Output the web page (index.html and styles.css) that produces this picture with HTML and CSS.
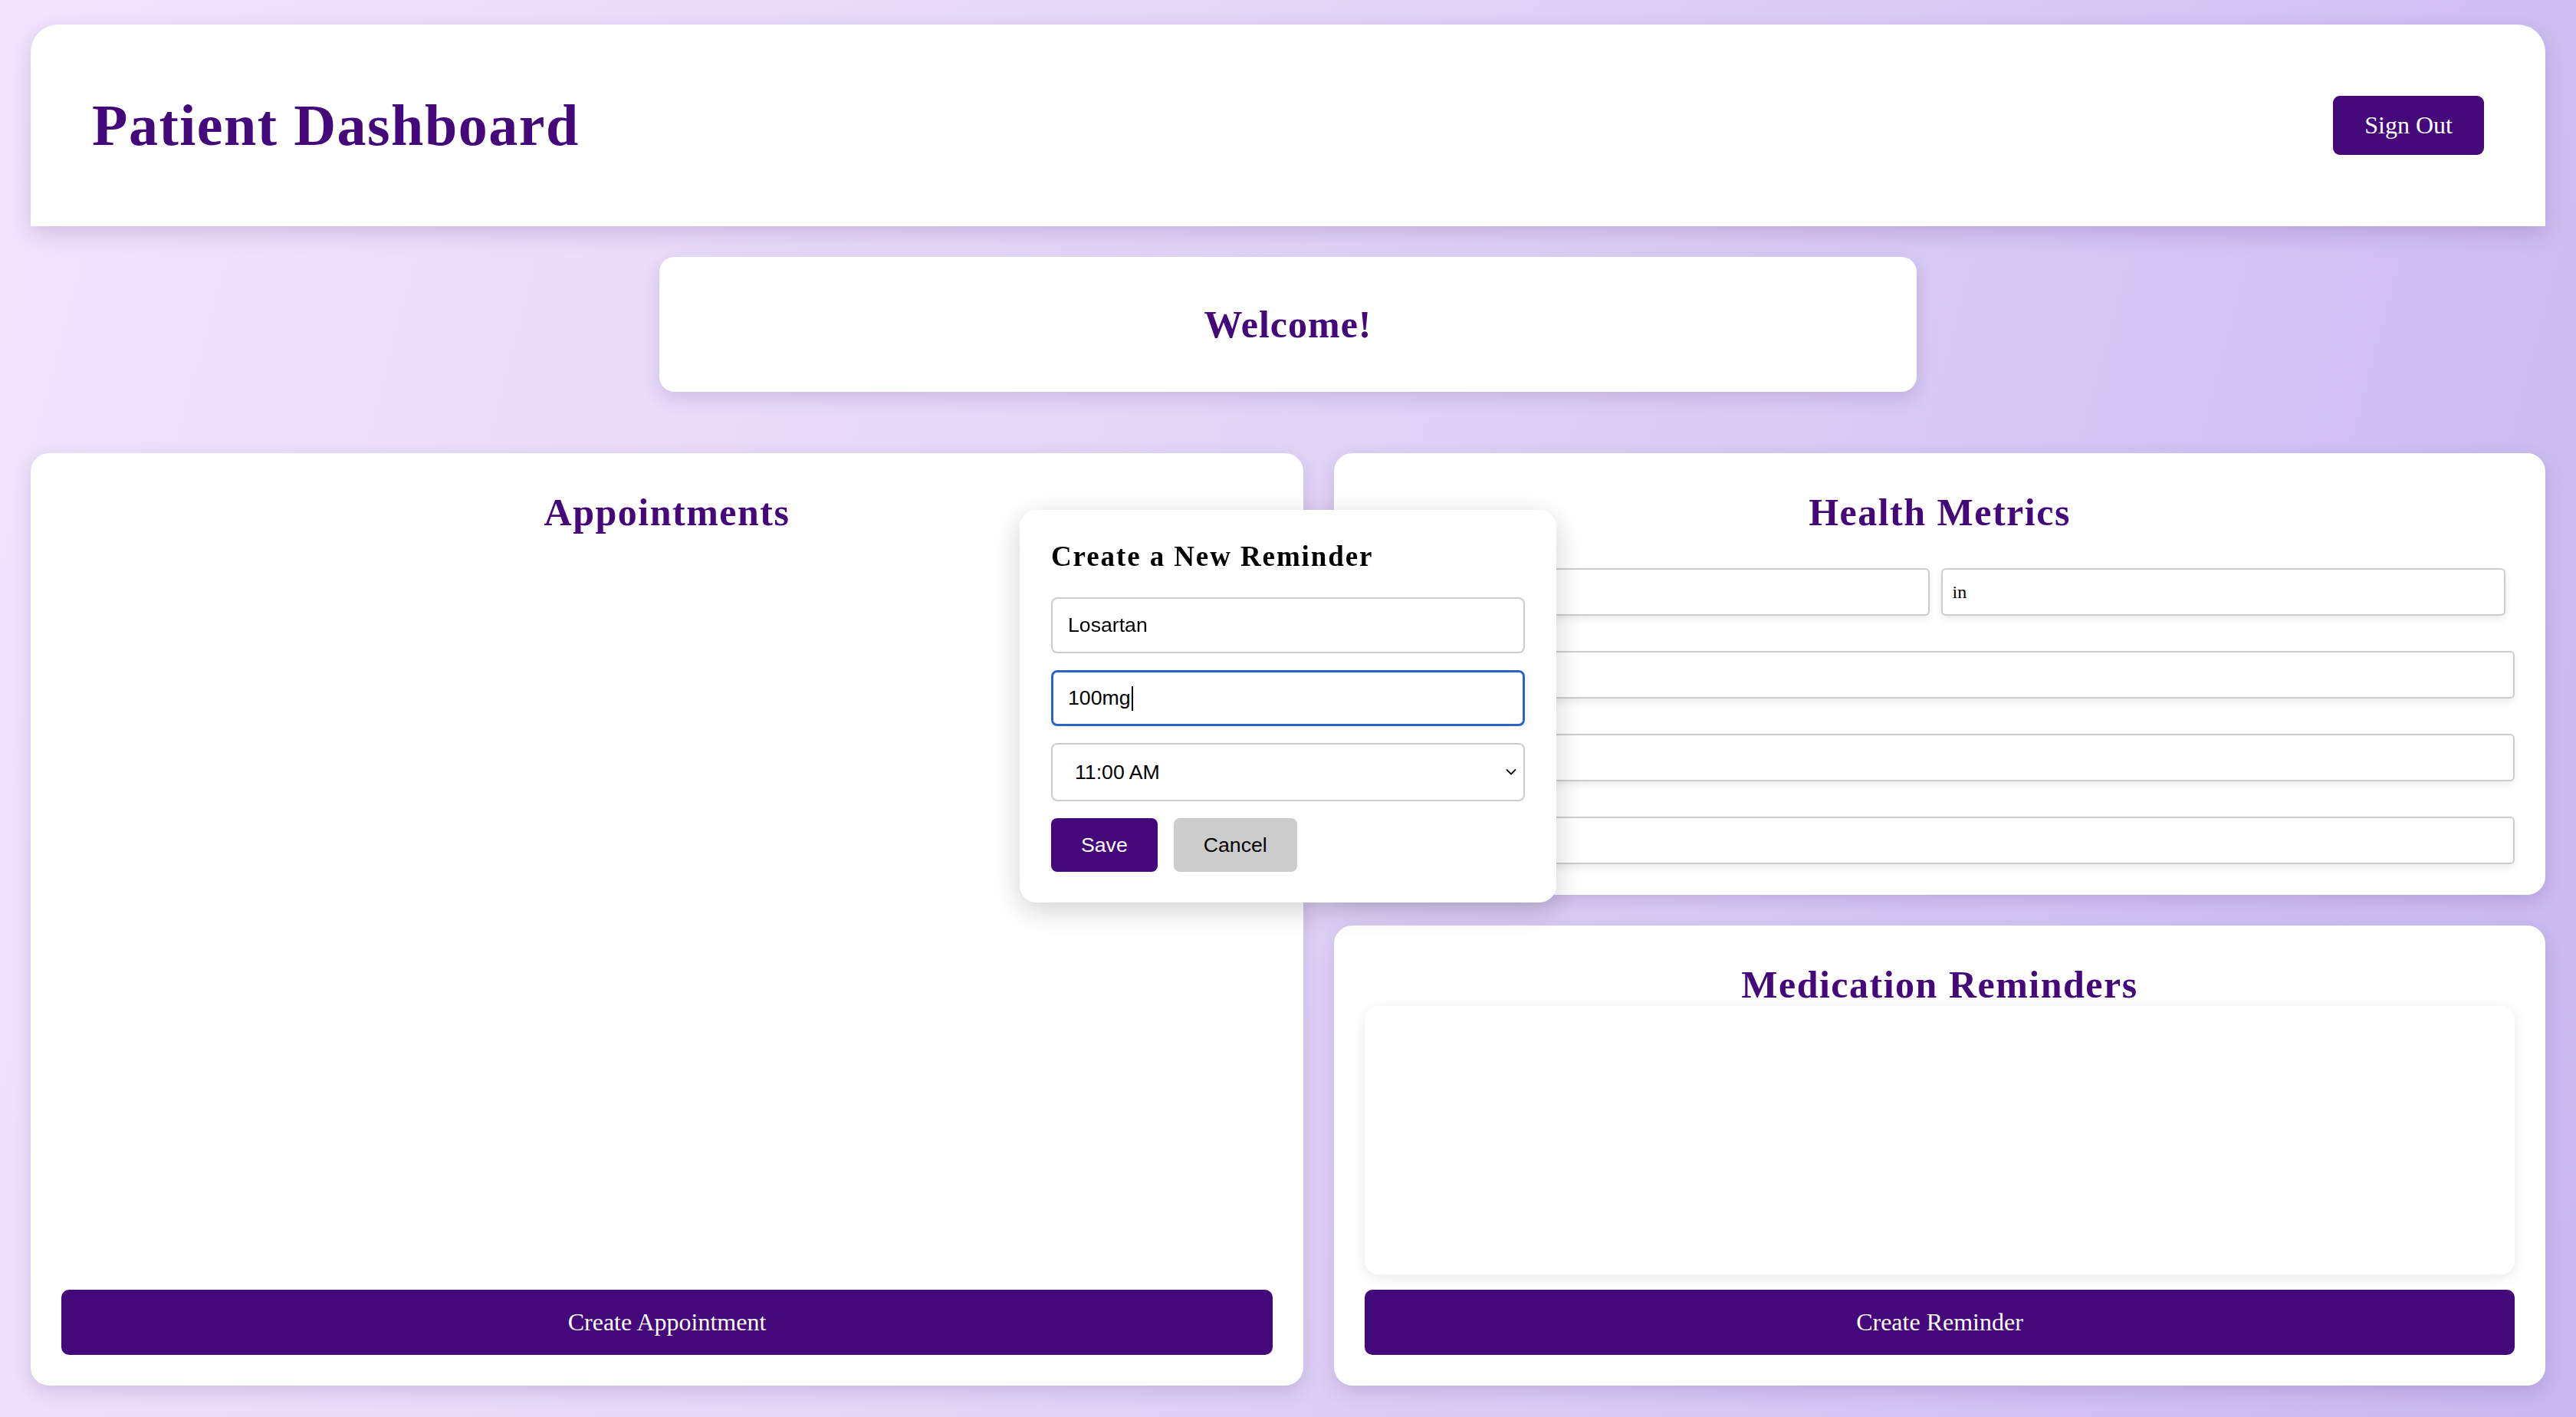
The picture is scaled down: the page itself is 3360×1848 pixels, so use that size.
FILE: index.html
```html
<!DOCTYPE html>
<html lang="en">
<head>
<meta charset="utf-8">
<title>Patient Dashboard</title>
<link rel="stylesheet" href="styles.css">
</head>
<body>
<header class="topbar">
  <h1 class="brand">Patient Dashboard</h1>
  <button class="btn-signout" type="button">Sign Out</button>
</header>

<section class="welcome">
  <h2 class="welcome-title">Welcome!</h2>
</section>

<main class="grid">
  <section class="card card-appointments">
    <h2 class="card-title">Appointments</h2>
    <button class="btn-wide" type="button">Create Appointment</button>
  </section>

  <section class="card card-metrics">
    <h2 class="card-title">Health Metrics</h2>
    <div class="metrics">
      <div class="metric-row">
        <input class="metric-input metric-half" type="text" value="">
        <input class="metric-input metric-half" type="text" value="in">
      </div>
      <input class="metric-input" type="text" value="">
      <input class="metric-input" type="text" value="">
      <input class="metric-input" type="text" value="">
    </div>
  </section>

  <section class="card card-meds">
    <h2 class="card-title">Medication Reminders</h2>
    <div class="med-list"></div>
    <button class="btn-wide" type="button">Create Reminder</button>
  </section>
</main>

<div class="modal">
  <h3 class="modal-title">Create a New Reminder</h3>
  <div class="modal-form">
    <input class="field" type="text" value="Losartan">
    <div class="field field-focused">100mg<span class="caret"></span></div>
    <div class="field field-select">
      <select class="select-native">
        <option>11:00 AM</option>
      </select>
      <svg class="chevron" width="14" height="10" viewBox="0 0 14 10"><path d="M1.5 2 L7 7.5 L12.5 2" fill="none" stroke="#111" stroke-width="1.8" stroke-linecap="round" stroke-linejoin="round"/></svg>
    </div>
    <div class="modal-actions">
      <button class="btn-save" type="button">Save</button>
      <button class="btn-cancel" type="button">Cancel</button>
    </div>
  </div>
</div>
</body>
</html>
```

FILE: styles.css
```css
* { box-sizing: border-box; }

html, body { height: 100%; }

body {
  margin: 0;
  padding: 32px 40px 40px;
  font-family: "Liberation Serif", "Times New Roman", serif;
  background: linear-gradient(105deg, #f1e5fc 0%, #e2d6f7 45%, #c8b8f0 100%);
  color: #000;
}

.topbar {
  display: flex;
  align-items: center;
  justify-content: space-between;
  padding: 86px 80px;
  background: #fff;
  border-radius: 36px 36px 0 0;
  box-shadow: 0 10px 28px rgba(60, 30, 110, 0.18);
}

.brand {
  margin: 0;
  font-size: 76px;
  line-height: 91px;
  font-weight: 700;
  letter-spacing: 1.5px;
  color: #45087a;
}

.btn-signout {
  font-family: "Liberation Serif", "Times New Roman", serif;
  font-size: 32px;
  line-height: 37px;
  padding: 20px 41px;
  color: #fff;
  background: #45087a;
  border: none;
  border-radius: 9px;
}

.welcome {
  width: 50%;
  margin: 40px auto 0;
  padding: 60px 0;
  background: #fff;
  border-radius: 20px;
  box-shadow: 0 8px 24px rgba(60, 30, 110, 0.16);
}

.welcome-title {
  margin: 0;
  text-align: center;
  font-size: 50px;
  line-height: 56px;
  font-weight: 700;
  letter-spacing: 1px;
  color: #45087a;
}

.grid {
  display: grid;
  grid-template-columns: 83fr 79fr;
  gap: 40px;
  margin-top: 80px;
}

.card {
  background: #fff;
  border-radius: 24px;
  padding: 40px;
  box-shadow: 0 8px 24px rgba(60, 30, 110, 0.16);
}

.card-appointments {
  grid-row: 1 / span 2;
  display: flex;
  flex-direction: column;
}

.card-title {
  margin: 9px 0 0;
  text-align: center;
  font-size: 50px;
  line-height: 56px;
  font-weight: 700;
  letter-spacing: 1.5px;
  color: #45087a;
}

.btn-wide {
  width: 100%;
  font-family: "Liberation Serif", "Times New Roman", serif;
  font-size: 32px;
  line-height: 37px;
  padding: 24px 0;
  color: #fff;
  background: #45087a;
  border: none;
  border-radius: 10px;
}

.card-appointments .btn-wide { margin-top: auto; }

.metrics {
  display: flex;
  flex-direction: column;
  gap: 46px;
  margin-top: 45px;
}

.metric-row {
  display: flex;
  gap: 15px;
  padding-right: 12px;
}

.metric-input {
  display: block;
  width: 100%;
  height: 62px;
  flex: none;
  padding: 0 13px;
  font-family: "Liberation Serif", "Times New Roman", serif;
  font-size: 24px;
  color: #000;
  background: #fff;
  border: 2px solid #cccccc;
  border-radius: 6px;
  box-shadow: 0 5px 10px rgba(0, 0, 0, 0.07);
}

.metric-half {
  flex: 1 1 0;
  min-width: 0;
}

.med-list {
  height: 350px;
  background: #fff;
  border-radius: 18px;
  box-shadow: 0 4px 18px rgba(0, 0, 0, 0.09);
}

.card-meds .btn-wide { margin-top: 20px; }

/* Modal */
.modal {
  position: fixed;
  left: 50%;
  top: calc(50% - 3px);
  width: 700px;
  transform: translate(-50%, -50%);
  padding: 40px 41px;
  background: #fff;
  border-radius: 22px;
  box-shadow: 0 10px 36px rgba(0, 0, 0, 0.18);
}

.modal-title {
  margin: 0 0 32px;
  font-size: 37px;
  line-height: 42px;
  font-weight: 700;
  letter-spacing: 1.9px;
  color: #000;
}

.modal-form {
  display: flex;
  flex-direction: column;
  gap: 22px;
}

.field {
  display: flex;
  align-items: center;
  width: 100%;
  height: 73px;
  padding: 0 20px;
  font-family: "Liberation Sans", Arial, sans-serif;
  font-size: 26.67px;
  color: #000;
  background: #fff;
  border: 2px solid #cccccc;
  border-radius: 8px;
}

.field-focused {
  border: 3px solid #2d62c8;
  padding: 0 19px;
}

.caret {
  display: inline-block;
  width: 2px;
  height: 32px;
  margin-left: 1px;
  background: #000;
}

.field-select {
  height: 76px;
  padding: 0 9px 0 29px;
}

.select-native {
  flex: 1;
  appearance: none;
  -webkit-appearance: none;
  border: none;
  background: transparent;
  padding: 0;
  font-family: "Liberation Sans", Arial, sans-serif;
  font-size: 26.67px;
  color: #000;
  outline: none;
}

.chevron { flex: none; }

.modal-actions {
  display: flex;
  gap: 21px;
}

.btn-save,
.btn-cancel {
  height: 70px;
  padding: 0 39px;
  font-family: "Liberation Sans", Arial, sans-serif;
  font-size: 26.67px;
  border: none;
  border-radius: 8px;
}

.btn-save {
  color: #fff;
  background: #45087a;
}

.btn-cancel {
  color: #000;
  background: #cccccc;
}
```
